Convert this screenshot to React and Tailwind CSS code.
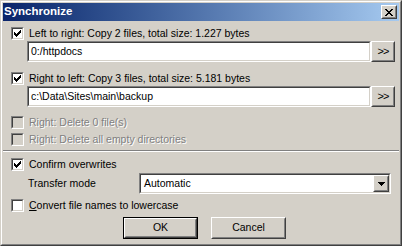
import React from "react";

// Win2000 palette
const face = "bg-[#D4D0C8]";

const Check = ({ checked, disabled }) => (
  <span className="block w-[13px] h-[13px] shrink-0 border border-t-[#808080] border-l-[#808080] border-r-white border-b-white">
    <span
      className={
        disabled
          ? "relative block w-full h-full border border-t-[#404040] border-l-[#404040] border-r-[#D4D0C8] border-b-[#D4D0C8] bg-[#D4D0C8]"
          : "relative block w-full h-full border border-t-[#404040] border-l-[#404040] border-r-[#D4D0C8] border-b-[#D4D0C8] bg-white"
      }
    >
      {checked && (
        <svg className="absolute left-[1px] top-[1px]" width="7" height="7" viewBox="0 0 7 7" shapeRendering="crispEdges">
          <path
            fill="#000"
            d="M6 0h1v3h-1zM5 1h1v3h-1zM4 2h1v3h-1zM0 2h1v3h-1zM1 3h1v3h-1zM2 4h1v3h-1zM3 3h1v3h-1z"
          />
        </svg>
      )}
    </span>
  </span>
);

const Sunken = ({ className, children }) => (
  <div className={"border border-t-[#808080] border-l-[#808080] border-r-white border-b-white " + className}>
    <div className="w-full h-full border border-t-[#404040] border-l-[#404040] border-r-[#D4D0C8] border-b-[#D4D0C8] bg-white flex items-center">
      {children}
    </div>
  </div>
);

const Raised = ({ className, children }) => (
  <div className={"border border-t-white border-l-white border-r-[#404040] border-b-[#404040] " + className}>
    <div className="w-full h-full border border-t-[#D4D0C8] border-l-[#D4D0C8] border-r-[#808080] border-b-[#808080] bg-[#D4D0C8] flex items-center justify-center">
      {children}
    </div>
  </div>
);

const CheckRow = ({ checked, disabled, className, children }) => (
  <div className={"flex items-center h-[13px] ml-[8px] " + className}>
    <Check checked={checked} disabled={disabled} />
    <span
      className={
        disabled
          ? "ml-[5px] leading-[13px] text-[#808080] [text-shadow:1px_1px_0_#fff]"
          : "ml-[5px] leading-[13px] text-black"
      }
    >
      {children}
    </span>
  </div>
);

const PathRow = ({ value, className }) => (
  <div className={"flex ml-[24px] h-[21px] " + className}>
    <Sunken className="w-[344px] h-[21px]">
      <span className="pl-[2px] leading-[15px]">{value}</span>
    </Sunken>
    <Raised className="w-[24px] h-[21px]">
      <span className="text-[11px] tracking-[-1px] leading-none">&gt;&gt;</span>
    </Raised>
  </div>
);

export default function App() {
  return (
    <div
      className={"w-[402px] h-[246px] " + face + " border border-t-[#D4D0C8] border-l-[#D4D0C8] border-r-[#404040] border-b-[#404040]"}
      style={{ fontFamily: '"Liberation Sans", Arial, sans-serif' }}
    >
      <div className="w-full h-full border border-t-white border-l-white border-r-[#808080] border-b-[#808080] p-[1px] flex flex-col text-[10.5px]">
        {/* title bar */}
        <div className="h-[18px] flex items-center justify-between bg-gradient-to-r from-[#0A246A] to-[#A6CAF0] pl-[1px] pr-[2px]">
          <span className="text-white font-bold text-[11.5px] leading-none">Synchronize</span>
          <Raised className="w-[16px] h-[14px]">
            <svg width="8" height="7" viewBox="0 0 8 7" shapeRendering="crispEdges">
              <path
                fill="#000"
                d="M0 0h2v1h-2zM6 0h2v1h-2zM1 1h2v1h-2zM5 1h2v1h-2zM2 2h4v1h-4zM3 3h2v1h-2zM2 4h4v1h-4zM1 5h2v1h-2zM5 5h2v1h-2zM0 6h2v1h-2zM6 6h2v1h-2z"
              />
            </svg>
          </Raised>
        </div>

        <CheckRow checked className="mt-[6px]">Left to right: Copy 2 files, total size: 1.227 bytes</CheckRow>
        <PathRow value="0:/httpdocs" className="mt-[1px]" />

        <CheckRow checked className="mt-[10px]">Right to left: Copy 3 files, total size: 5.181 bytes</CheckRow>
        <PathRow value="c:\Data\Sites\main\backup" className="mt-[1px]" />

        <CheckRow disabled className="mt-[9px]">Right: Delete 0 file(s)</CheckRow>
        <CheckRow disabled className="mt-[4px]">Right: Delete all empty directories</CheckRow>

        {/* separator */}
        <div className="mt-[4px] h-[2px] border-t border-t-[#808080] border-b border-b-white" />

        <CheckRow checked className="mt-[6px]">Confirm overwrites</CheckRow>

        <div className="flex items-center mt-[2px] h-[21px]">
          <span className="ml-[25px] w-[111px]">Transfer mode</span>
          <Sunken className="w-[252px] h-[21px]">
            <span className="pl-[3px] flex-1">Automatic</span>
            <Raised className="w-[16px] h-[17px]">
              <svg width="7" height="4" viewBox="0 0 7 4" shapeRendering="crispEdges">
                <path fill="#000" d="M0 0h7v1h-7zM1 1h5v1h-5zM2 2h3v1h-3zM3 3h1v1h-1z" />
              </svg>
            </Raised>
          </Sunken>
        </div>

        <CheckRow className="mt-[5px]">
          <span className="underline">C</span>onvert file names to lowercase
        </CheckRow>

        <div className="flex mt-[5px] ml-[120px] gap-[13px]">
          <div className="border border-black">
            <Raised className="w-[73px] h-[20px]">
              <span>OK</span>
            </Raised>
          </div>
          <Raised className="w-[75px] h-[22px]">
            <span>Cancel</span>
          </Raised>
        </div>
      </div>
    </div>
  );
}
